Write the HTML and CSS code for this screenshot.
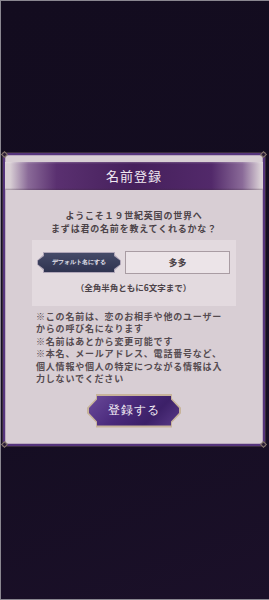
FILE: index.html
```html
<!DOCTYPE html>
<html lang="ja">
<head>
    <meta charset="UTF-8">
    <meta name="viewport" content="width=device-width, initial-scale=1.0">
    <title>名前登録</title>
    <link rel="stylesheet" href="styles.css">
</head>
<body>
    <div class="screen">
        <div class="panel">
            <span class="corner tl"></span>
            <span class="corner tr"></span>
            <span class="corner bl"></span>
            <span class="corner br"></span>

            <div class="title-band">名前登録</div>

            <p class="intro">ようこそ１９世紀英国の世界へ<br>まずは君の名前を教えてくれるかな？</p>

            <div class="name-box">
                <div class="name-row">
                    <button class="default-btn" type="button"><span>デフォルト名にする</span></button>
                    <div class="name-input">多多</div>
                </div>
                <p class="limit">（全角半角ともに6文字まで）</p>
            </div>

            <p class="notes">※この名前は、恋のお相手や他のユーザー<br>からの呼び名になります<br>※名前はあとから変更可能です<br>※本名、メールアドレス、電話番号など、<br>個人情報や個人の特定につながる情報は入<br>力しないでください</p>

            <div class="submit-wrap">
                <button class="submit-btn" type="button"><span>登録する</span></button>
            </div>
        </div>
    </div>
</body>
</html>
```

FILE: styles.css
```css
html, body {
    margin: 0;
    padding: 0;
}

body {
    font-family: "Noto Sans CJK JP", "Noto Sans", sans-serif;
    background: #140d1f;
}

.screen {
    width: 269px;
    height: 600px;
    box-sizing: border-box;
    border-left: 1px solid #8a8790;
    border-top: 1px solid #8a8790;
    border-bottom: 1px solid #8a8790;
    padding-top: 152px;
    background: linear-gradient(160deg, #130c1f 0%, #140d21 55%, #1b1029 100%);
}

.panel {
    position: relative;
    width: 262px;
    margin-left: 2px;
    box-sizing: border-box;
    background: #d8ced4;
    border: 2px solid #55347c;
    box-shadow: 0 0 0 1px #3a2c3c, inset 0 0 0 1px #b9a9bd;
    padding: 7px 0 16px;
}

/* 角の飾り */
.corner {
    position: absolute;
    width: 3px;
    height: 3px;
    background: #2a1c36;
    border: 1px solid #8a7a70;
    transform: rotate(45deg);
}

.corner.tl { top: -3px; left: -3px; }
.corner.tr { top: -3px; right: -3px; }
.corner.bl { bottom: -3px; left: -3px; }
.corner.br { bottom: -3px; right: -3px; }

.title-band {
    height: 28px;
    line-height: 28px;
    text-align: center;
    color: #f1eaf2;
    font-size: 13px;
    letter-spacing: 1px;
    background:
        linear-gradient(180deg, rgba(255, 255, 255, 0.2) 0, rgba(255, 255, 255, 0) 2px, rgba(0, 0, 0, 0) 26px, rgba(60, 40, 60, 0.35) 28px),
        linear-gradient(90deg, rgba(216, 206, 212, 1) 2%, #8a6a98 9%, #5a3070 20%, #46205c 50%, #52296a 80%, #8a6a98 92%, rgba(216, 206, 212, 1) 99%);
}

.intro {
    margin: 20px 0 0;
    font-size: 9px;
    letter-spacing: 0.8px;
    line-height: 12.5px;
    font-weight: 700;
    color: #4c4348;
    text-align: center;
    white-space: nowrap;
}

.name-box {
    width: 204px;
    margin: 5px auto 0;
    box-sizing: border-box;
    background: #e3dadf;
    padding: 11px 6px 12px 5px;
}

.name-row {
    display: flex;
    gap: 4px;
    height: 23px;
}

.default-btn {
    width: 84px;
    height: 21px;
    margin-top: 1px;
    padding: 1px;
    border: none;
    background: #b0a6b8;
    clip-path: polygon(6px 0, calc(100% - 6px) 0, calc(100% - 6px) 3px, 100% 40%, 100% 60%, calc(100% - 6px) calc(100% - 3px), calc(100% - 6px) 100%, 6px 100%, 6px calc(100% - 3px), 0 60%, 0 40%, 6px 3px);
    cursor: pointer;
}

.default-btn span {
    display: flex;
    align-items: center;
    justify-content: center;
    height: 100%;
    color: #e8e6f0;
    font-size: 6px;
    font-weight: 700;
    background: linear-gradient(180deg, #454a68, #2f3350);
    clip-path: polygon(6px 0, calc(100% - 6px) 0, calc(100% - 6px) 3px, 100% 40%, 100% 60%, calc(100% - 6px) calc(100% - 3px), calc(100% - 6px) 100%, 6px 100%, 6px calc(100% - 3px), 0 60%, 0 40%, 6px 3px);
}

.name-input {
    flex: 1;
    box-sizing: border-box;
    border: 1px solid #a99ca3;
    background: #ece4e8;
    display: flex;
    align-items: center;
    justify-content: center;
    font-size: 9px;
    font-weight: 700;
    color: #4c4348;
}

.limit {
    margin: 7px 0 0;
    font-size: 8.5px;
    line-height: 12.5px;
    font-weight: 700;
    color: #4c4348;
    text-align: center;
    white-space: nowrap;
}

.notes {
    margin: 5px 0 0 31px;
    font-size: 9px;
    letter-spacing: 0.8px;
    line-height: 12.5px;
    font-weight: 700;
    color: #554b50;
    white-space: nowrap;
}

.submit-wrap {
    display: flex;
    justify-content: center;
    margin-top: 8px;
}

.submit-btn {
    width: 94px;
    height: 34px;
    padding: 2px;
    border: none;
    background: #c7b39a;
    clip-path: polygon(9px 0, calc(100% - 9px) 0, calc(100% - 9px) 5px, 100% 42%, 100% 58%, calc(100% - 9px) calc(100% - 5px), calc(100% - 9px) 100%, 9px 100%, 9px calc(100% - 5px), 0 58%, 0 42%, 9px 5px);
    cursor: pointer;
}

.submit-btn span {
    display: flex;
    align-items: center;
    justify-content: center;
    height: 100%;
    color: #f2ecf4;
    font-size: 12px;
    letter-spacing: 1px;
    background: linear-gradient(135deg, #6a4a9a 0%, #4a2a7c 40%, #3c2068 70%, #5a3a88 100%);
    clip-path: polygon(8px 0, calc(100% - 8px) 0, calc(100% - 8px) 4px, 100% 42%, 100% 58%, calc(100% - 8px) calc(100% - 4px), calc(100% - 8px) 100%, 8px 100%, 8px calc(100% - 4px), 0 58%, 0 42%, 8px 4px);
}
```
